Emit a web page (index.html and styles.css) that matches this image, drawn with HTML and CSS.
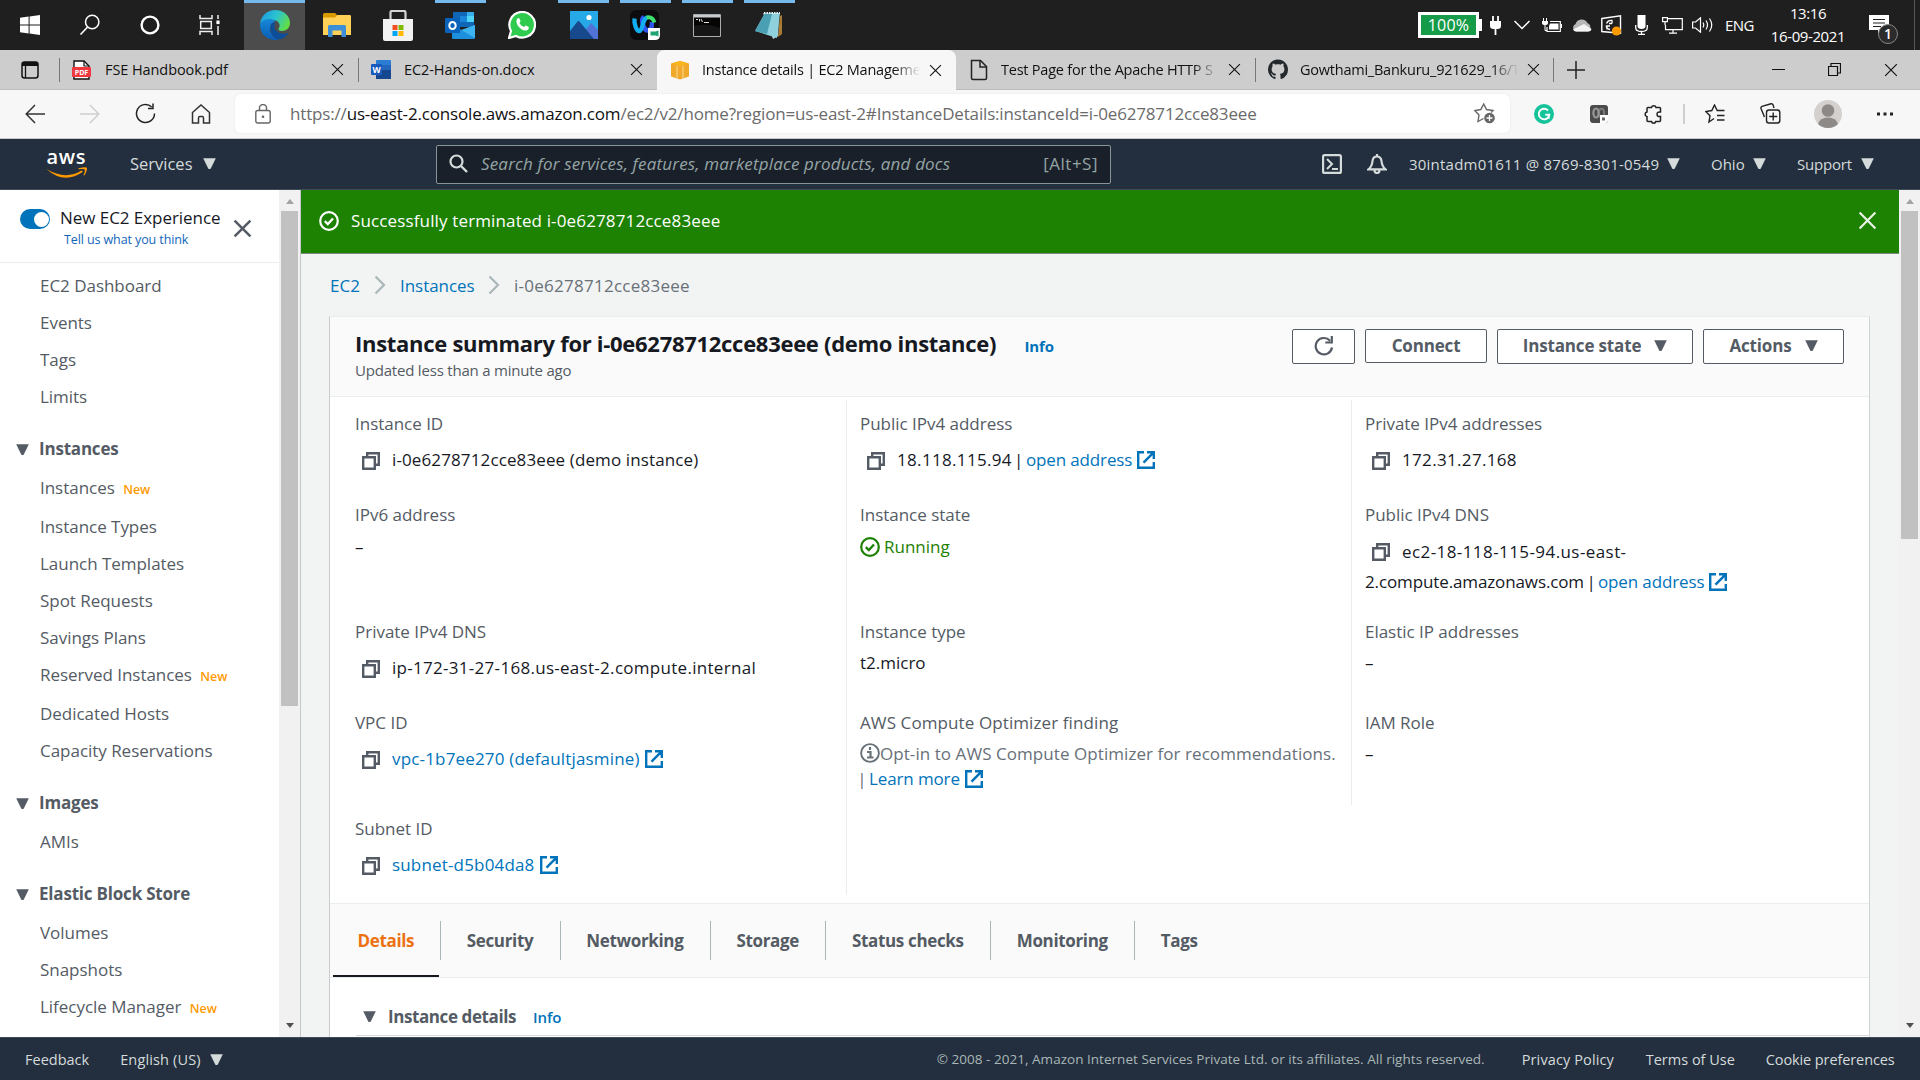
FILE: index.html
```html
<!DOCTYPE html>
<html lang="en">
<head>
<meta charset="utf-8">
<title>Instance details | EC2 Management Console</title>
<link rel="stylesheet" href="styles.css">
</head>
<body>
<svg class="defs" aria-hidden="true">
  <symbol id="i-close" viewBox="0 0 12 12"><path d="M1 1l10 10M11 1L1 11" fill="none" stroke="currentColor"/></symbol>
  <symbol id="i-copy" viewBox="0 0 18 18"><path d="M5.2 5V1.2h11.6v11.6H13" fill="none" stroke="currentColor" stroke-width="2.4"/><path d="M1.2 5.2h11.6v11.6H1.2z" fill="none" stroke="currentColor" stroke-width="2.4"/></symbol>
  <symbol id="i-ext" viewBox="0 0 18 18"><path d="M7 1.2H1.2v15.6h15.6V11M10 1.2h6.8V8M16.2 1.8L6.500 11.700" fill="none" stroke="currentColor" stroke-width="2.4"/></symbol>
  <symbol id="i-tri" viewBox="0 0 12 10"><path d="M.2.2h11.600L7.200 9.500q-1.200 1-2.400 0z" fill="currentColor"/></symbol>
  <symbol id="i-ok" viewBox="0 0 20 20"><circle cx="10" cy="10" r="8.8" fill="none" stroke="currentColor" stroke-width="2.2"/><path d="M5.8 10.2l3 2.9 5.2-5.6" fill="none" stroke="currentColor" stroke-width="2.3"/></symbol>
  <symbol id="i-chev" viewBox="0 0 12 20"><path d="M1.5 1.5l8.5 8.5-8.5 8.5" fill="none" stroke="currentColor" stroke-width="2.2"/></symbol>
</svg>

<div class="taskbar">
  <div class="tb-sys"><svg width="20" height="20" viewBox="0 0 20 20"><path d="M0 2.8l8.6-1.2v7.9H0zM9.600 1.400L20 0v9.500H9.600zM0 10.500h8.600v7.900L0 17.200zM9.600 10.500H20V20L9.600 18.600z" fill="#fff"/></svg></div>
  <div class="tb-sys"><svg width="22" height="22" viewBox="0 0 22 22"><circle cx="13.2" cy="8" r="6.7" fill="none" stroke="#fff" stroke-width="1.5"/><path d="M8.6 13L1.5 20.5" stroke="#fff" stroke-width="1.6"/></svg></div>
  <div class="tb-sys"><svg width="20" height="20" viewBox="0 0 20 20"><circle cx="10" cy="10" r="8.4" fill="none" stroke="#fff" stroke-width="2.4"/></svg></div>
  <div class="tb-sys"><svg width="22" height="20" viewBox="0 0 22 20"><path d="M1 0v3.5h12V0M1 20v-3.5h12V20M1.7 6.5h10.6v7H1.7zM19 0v4M19 11v9" fill="none" stroke="#eee" stroke-width="1.5"/><path d="M17.4 5.5h3.2v3.6h-3.2z" fill="#fff"/></svg></div>
  <div class="tb-app tb-app-on tb-app-first"><svg width="30" height="30" viewBox="0 0 30 30"><defs><linearGradient id="eg" x1="0" x2="1" y1=".2" y2=".6"><stop offset="0" stop-color="#1b9be2"/><stop offset=".5" stop-color="#2cc3d0"/><stop offset="1" stop-color="#63e03e"/></linearGradient><linearGradient id="eb" x1="0" x2="0" y1="0" y2="1"><stop offset="0" stop-color="#1688d8"/><stop offset="1" stop-color="#0a5cb4"/></linearGradient></defs><path d="M0 14C1 5 8 0 15 0c9 0 15 6 15 13 0 5-4 8-8 8-3 0-4.300-1.500-3-3 2-3-.5-8-6-8C7 10 1 12 0 14z" fill="url(#eg)"/><path d="M0 15C1 11 5 9 10 9c3 0 5 1 6 2-4 1-6 4-6 8 0 5 4 9 9 10.500C9 32 0 25 0 15z" fill="url(#eb)"/><path d="M12 13c-3 4-2 11 3 15 5 3 11 0 13.500-5.500-6 3-13 0-14-5-.3-2 .5-4 1-5z" fill="#0c4f98"/></svg></div>
  <div class="tb-app"><svg width="28" height="24" viewBox="0 0 28 24"><path d="M0 1.500Q0 0 1.500 0H12l2.500 2.500H28V22H0z" fill="#d99a00"/><path d="M0 4.500h12L14.500 2H26.500q1.500 0 1.500 1.500V22H0z" fill="#ffd257"/><path d="M5 24V13.500q0-1.500 1.500-1.500h15q1.500 0 1.500 1.500V24h-4.500v-6.500h-9V24z" fill="#3c8fd6"/></svg></div>
  <div class="tb-app"><svg width="30" height="31" viewBox="0 0 30 31"><path d="M7.500 9V2.500Q7.500 1 9 1h12q1.500 0 1.500 1.500V9" fill="none" stroke="#d5d5d5" stroke-width="2.200"/><path d="M0 9h30v20q0 2-2 2H2q-2 0-2-2z" fill="#f2f2f2"/><path d="M9.500 15h5v5h-5z" fill="#f25022"/><path d="M15.500 15h5v5h-5z" fill="#7fba00"/><path d="M9.500 21h5v5h-5z" fill="#00a4ef"/><path d="M15.500 21h5v5h-5z" fill="#ffb900"/></svg></div>
  <div class="tb-app tb-run"><svg width="30" height="27" viewBox="0 0 30 27"><path d="M8 1q0-1 1-1h19q1 0 1 1v14H8z" fill="#1067b8"/><path d="M15 4h7v6h-7z" fill="#1a86d9"/><path d="M22 4h7v6h-7z" fill="#50d3f5"/><path d="M22 0h6q1 0 1 1v3h-7z" fill="#35b0ea"/><path d="M7 13l11.500 6L30 13v12.500q0 1.500-1.500 1.500h-20Q7 27 7 25.500z" fill="#1c8fdd"/><path d="M30 13v13L16 18z" fill="#3db4f2"/><rect y="6" width="15" height="15" rx="1.200" fill="#0a62ba"/><ellipse cx="7.500" cy="13.500" rx="3.200" ry="3.600" fill="none" stroke="#fff" stroke-width="2"/></svg></div>
  <div class="tb-app"><svg width="28" height="28" viewBox="0 0 28 28"><path d="M1 27l2-7A12.800 12.800 0 1 1 8 25z" fill="#2ecb4e" stroke="#fff" stroke-width="2.200"/><path d="M9 8c1-1.300 2-1.200 2.500-.3l1 2.300c.2.600-.9 1.500-1 2 1 2 2.500 3.300 4.500 4 .6-.2 1.300-1.700 1.900-1.500l2.400 1.200c.9.500.7 3-1.800 3.700C13.500 20.600 6.500 13 9 8z" fill="#fff"/></svg></div>
  <div class="tb-app tb-run"><svg width="28" height="28" viewBox="0 0 28 28"><path d="M0 0h28v28H0z" fill="#27a9e8"/><path d="M13 22l8-10 7 7v9H13z" fill="#5273d6"/><path d="M0 20l7.500-9.500Q8.500 9.500 9.500 10.500L24 28H0z" fill="#164a8c"/><circle cx="19" cy="6.500" r="2.600" fill="#fff"/></svg></div>
  <div class="tb-app tb-run"><svg width="30" height="30" viewBox="0 0 30 30"><rect width="29" height="30" rx="6" fill="#0c0c0f"/><path d="M14 7c-4 2 0 13.500 3.500 13.500S22 16 22 12" fill="none" stroke="#2d55f0" stroke-width="4.500"/><path d="M4.500 8.500C4 13 6 21 9.500 21c3.500 0 2.500-13 8-13.500" fill="none" stroke="#12aef0" stroke-width="4.300"/><path d="M16.500 7.500q6-1.500 8 5" fill="none" stroke="#3fe06c" stroke-width="3.800"/><path d="M18 18h12v7q0 5-5 5h-7z" fill="#fff"/><path d="M20.500 21.500h5l3-1v6l-3-1h-5z" fill="#1fa373"/></svg></div>
  <div class="tb-app tb-run"><svg width="28" height="23" viewBox="0 0 28 23"><path d="M.5.500h27v22H.5z" fill="#050505" stroke="#a9adb0"/><path d="M1 1h26v2.500H1z" fill="#c9ccce"/><path d="M3 5.500h2M6.500 5v2.500M8 5l1.500 3M11 8.500h5" stroke="#ddd"/><path d="M1 22V12Q14 8 27 14V22z" fill="#161616"/></svg></div>
  <div class="tb-app tb-run"><svg width="28" height="27" viewBox="0 0 28 27"><path d="M25 4l2-1v19l-4 3z" fill="#a97b35"/><path d="M8 1l16 1.500-1 21.500-5 3z" fill="#b9d5dc"/><path d="M10 1h15l-3 25L0 19z" fill="#8fd0dd"/><path d="M10 1l7 1-5 20L0 19z" fill="#4a9fb2"/><path d="M9 1h16" stroke="#e8eef0" stroke-width="2" stroke-dasharray="1.500 1"/></svg></div>
  <div class="tray">
    <div class="bat"><span>100%</span></div>
    <svg class="t-plug" width="11" height="19" viewBox="0 0 11 19"><path d="M3 0v5M8 0v5M5.500 12v7" stroke="#fff" stroke-width="1.800"/><path d="M0 5h11v5q0 3-3.500 3h-4Q0 13 0 10z" fill="#fff"/></svg>
    <svg class="t-chev" width="16" height="10" viewBox="0 0 16 10"><path d="M.5 1L8 8.500 15.500 1" fill="none" stroke="#fff" stroke-width="1.500"/></svg>
    <svg class="t-batt" width="20" height="15" viewBox="0 0 20 15"><path d="M8 3.500h10.300V13.500H5V9" fill="none" stroke="#fff" stroke-width="1.200"/><path d="M8 5.500h8.500v6H7V8zM19 6h1v4h-1zM0 3h6v2q0 2-3 2T0 5z" fill="#fff"/><path d="M1.500 0v3M4.500 0v3M3 7v5.500h2" stroke="#fff" fill="none"/></svg>
    <svg class="t-cloud" width="20" height="13" viewBox="0 0 20 13"><path d="M4 12.500a4 4 0 0 1-.500-7.500A6.500 6.500 0 0 1 15.500 4a5 5 0 0 1 1 8.500z" fill="#b7b7b7"/><path d="M1 10.500L12 5l7.500 5q-.5 2.500-3 2.500H4q-2 0-3-2z" fill="#f4f4f4"/></svg>
    <svg class="t-upd" width="21" height="21" viewBox="0 0 21 21"><path d="M.8 3.500L19.500.8v17.500L.8 16.500z" fill="none" stroke="#fff" stroke-width="1.400"/><path d="M5.500 8.500Q7 5 11 5.500v3M11 8.500H8M5.500 10.500q-1 3 3.500 4M6 14.500V11h3" fill="none" stroke="#fff" stroke-width="1.300"/><circle cx="15.500" cy="16" r="4.600" fill="#f90"/></svg>
    <svg class="t-mic" width="13" height="20" viewBox="0 0 13 20"><path d="M2.500 0h8v11q0 3-4 3t-4-3z" fill="#fff"/><path d="M.700 10v2.500q0 4 5.800 4t5.800-4V10M6.500 16.500v3M3 19.300h7" fill="none" stroke="#fff" stroke-width="1.300"/></svg>
    <svg class="t-net" width="21" height="17" viewBox="0 0 21 17"><path d="M6 1.600h14.300v11H3.500V8M11 12.600V16M7 16.200h8M.600.600h4.800v4H.6zM3 4.500V8" fill="none" stroke="#fff" stroke-width="1.200"/></svg>
    <svg class="t-vol" width="21" height="16" viewBox="0 0 21 16"><path d="M.6 5h3L8.500.8v14.400L3.600 11H.6z" fill="none" stroke="#fff" stroke-width="1.200"/><path d="M11 5.500q1.500 2.500 0 5M14 3.500q3 4.500 0 9M17.500 1.500q4.500 6.500 0 13" fill="none" stroke="#fff" stroke-width="1.200"/></svg>
    <span class="t-lang">ENG</span>
    <div class="t-clock"><span>13:16</span><span>16-09-2021</span></div>
    <div class="t-note"><svg width="20" height="20" viewBox="0 0 20 20"><path d="M0 0h20v15h-9l-2 5v-5H0z" fill="#fff"/><path d="M4 4.500h12M4 8h12M4 11.500h8" stroke="#222" stroke-width="1.200"/></svg><b>1</b></div>
    <i class="t-edge"></i>
  </div>
</div>

<div class="tabs">
  <div class="tabmenu"><svg width="18" height="18" viewBox="0 0 18 18"><rect x="1" y="1" width="16" height="16" rx="2.500" fill="none" stroke="#111" stroke-width="1.500"/><path d="M1 2.500Q1 1 3 1h12q2 0 2 1.500V5H1z" fill="#111"/><path d="M4.500 5v12" stroke="#111" stroke-width="1.300"/></svg></div>
  <div class="tab sep file"><svg class="fav" width="20" height="20" viewBox="0 0 20 20"><path d="M2 1h10l5 5v13H2z" fill="#fff" stroke="#111" stroke-width="1.400"/><path d="M12 1v5h5" fill="none" stroke="#111" stroke-width="1.200"/><rect y="7" width="19" height="10" rx="1" fill="#f0383e"/><text x="9.500" y="14.500" font-size="7" font-weight="700" text-anchor="middle" fill="#fff">PDF</text></svg><span>FSE Handbook.pdf</span><svg class="x"><use href="#i-close"/></svg></div>
  <div class="tab sep file"><svg class="fav" width="20" height="20" viewBox="0 0 20 20"><rect x="5" y="0" width="15" height="19" rx="1" fill="#2b7cd3"/><path d="M5 5h15v5H5z" fill="#2266bd"/><path d="M5 10h15v9H5z" fill="#15478f"/><rect y="4" width="11" height="11" rx="1" fill="#185abd"/><text x="5.500" y="12.600" font-size="8.500" font-weight="700" text-anchor="middle" fill="#fff">W</text></svg><span>EC2-Hands-on.docx</span><svg class="x"><use href="#i-close"/></svg></div>
  <div class="tab active"><svg class="fav" width="20" height="20" viewBox="0 0 20 20"><path d="M1 3.500L10 1l9 2.500v13L10 19.500l-9-3z" fill="#f0a92b"/><path d="M10 1l9 2.500L10 6 1 3.500z" fill="#f9b51c"/><path d="M7 6v12.500M13 6v12.500" stroke="#f8d488" stroke-width="1.200"/></svg><span class="fade">Instance details | EC2 Manageme</span><svg class="x"><use href="#i-close"/></svg></div>
  <div class="tab"><svg class="fav" width="20" height="22" viewBox="0 0 20 22"><path d="M2.500 1.500h9l6 6V19q0 1.500-1.500 1.500H4Q2.500 20.500 2.500 19z" fill="none" stroke="#222" stroke-width="1.500"/><path d="M11 1.500V8h6.500" fill="none" stroke="#222" stroke-width="1.500"/></svg><span class="fade">Test Page for the Apache HTTP S</span><svg class="x"><use href="#i-close"/></svg></div>
  <div class="tab sep last"><svg class="fav" width="21" height="21" viewBox="0 0 16 16"><path fill="#24292e" d="M8 0C3.580 0 0 3.580 0 8c0 3.540 2.290 6.530 5.470 7.590.4.070.55-.17.55-.38 0-.19-.01-.82-.01-1.490-2.010.37-2.530-.49-2.690-.94-.09-.23-.48-.94-.82-1.130-.28-.15-.68-.52-.01-.53.63-.01 1.080.58 1.230.82.72 1.210 1.870.87 2.330.66.07-.52.28-.87.51-1.070-1.780-.2-3.640-.89-3.640-3.950 0-.87.31-1.590.82-2.150-.08-.2-.36-1.020.08-2.120 0 0 .67-.21 2.200.82.64-.18 1.320-.27 2-.27s1.360.09 2 .27c1.530-1.040 2.200-.82 2.200-.82.44 1.100.16 1.920.08 2.120.51.56.82 1.270.82 2.150 0 3.070-1.870 3.750-3.650 3.950.29.25.54.73.54 1.480 0 1.070-.01 1.930-.01 2.200 0 .21.15.46.55.38A8.010 8.010 0 0 0 16 8c0-4.420-3.580-8-8-8z"/></svg><span class="fade">Gowthami_Bankuru_921629_16/T</span><svg class="x"><use href="#i-close"/></svg></div>
  <div class="newtab"><svg width="18" height="18" viewBox="0 0 18 18"><path d="M9 0v18M0 9h18" stroke="#222" stroke-width="1.500"/></svg></div>
  <div class="win">
    <svg width="13" height="13" viewBox="0 0 13 13"><path d="M0 6.500h13" stroke="#111"/></svg>
    <svg width="13" height="13" viewBox="0 0 13 13"><path d="M.5 3.500h9v9h-9zM3 3V.5h9.500V10H10" fill="none" stroke="#111" stroke-width="1.200"/></svg>
    <svg width="14" height="14"><use href="#i-close"/></svg>
  </div>
</div>

<div class="toolbar">
  <svg class="nav" width="20" height="20" viewBox="0 0 20 20"><path d="M20 10H1.500M10 1L1.200 10 10 19" fill="none" stroke="#333" stroke-width="1.500"/></svg>
  <svg class="nav" width="20" height="20" viewBox="0 0 20 20"><path d="M0 10h18.500M10 1l8.800 9L10 19" fill="none" stroke="#cfcfcf" stroke-width="1.500"/></svg>
  <svg class="nav" width="21" height="21" viewBox="0 0 21 21"><path d="M19.500 10.500a9 9 0 1 1-2.800-6.500M18 .5v5h-5" fill="none" stroke="#222" stroke-width="1.500"/></svg>
  <svg class="nav" width="20" height="20" viewBox="0 0 20 20"><path d="M1.500 8.500L10 1l8.500 7.500V19H12.500v-5q0-1.500-1.300-1.500H8.800q-1.300 0-1.300 1.500v5H1.500z" fill="none" stroke="#333" stroke-width="1.500"/></svg>
  <div class="address">
    <svg width="16" height="20" viewBox="0 0 16 20"><rect x=".8" y="6.500" width="14.400" height="12.500" rx="2" fill="none" stroke="#666" stroke-width="1.400"/><path d="M4.500 6.500V4a3.500 3.500 0 0 1 7 0v2.500" fill="none" stroke="#666" stroke-width="1.400"/><circle cx="8" cy="12.700" r="1.300" fill="#666"/></svg>
    <span class="url">https://<b>us-east-2.console.aws.amazon.com</b>/ec2/v2/home?region=us-east-2#InstanceDetails:instanceId=i-0e6278712cce83eee</span>
    <svg class="fadd" width="21" height="21" viewBox="0 0 21 21"><path d="M9.500 15.500L4 18.500l1-6.500L.8 7.500l6-1L9.700 1l2.800 5.500 6.500 1-2 2" fill="none" stroke="#666" stroke-width="1.400"/><circle cx="15.500" cy="15" r="5.300" fill="#666"/><path d="M15.500 12v6M12.500 15h6" stroke="#fff" stroke-width="1.300"/></svg>
  </div>
  <svg class="ex" width="20" height="20" viewBox="0 0 20 20"><circle cx="10" cy="10" r="10" fill="#15c39a"/><path d="M14 6.500A5.300 5.300 0 1 0 15.300 10.800h-4M14.800 14.800v-4" fill="none" stroke="#fff" stroke-width="1.900"/></svg>
  <svg class="ex" width="18" height="20" viewBox="0 0 18 20"><rect y="1" width="18" height="18" rx="3" fill="#4b4b4b"/><ellipse cx="11.500" cy="9" rx="2.600" ry="4.300" fill="none" stroke="#7a7a7a" stroke-width="2"/><ellipse cx="6" cy="9" rx="2.600" ry="4.500" fill="none" stroke="#989898" stroke-width="2.200"/><path d="M10 11h8v5q0 3-3 3h-5z" fill="#fff"/><path d="M12 13.500h3v3h-3z" fill="#666"/></svg>
  <svg class="ex" width="20" height="20" viewBox="0 0 20 20"><path d="M5 3.500h3.500a2.300 2.300 0 0 1 4.500 0h3.500q1 0 1 1V8q-3.500-.5-3.500 2.300t3.500 2.200v4q0 1-1 1h-3.700a2.200 2.200 0 0 1-4.300 0H5q-1 0-1-1v-3.800a2.400 2.400 0 0 1 0-4.700V4.500q0-1 1-1z" fill="none" stroke="#222" stroke-width="1.500"/></svg>
  <i class="bar"></i>
  <svg class="ex" width="20" height="20" viewBox="0 0 20 20"><path d="M9 14.500L4 18l1-6.300L.8 7.500l6-1L9.500 1l2.700 5.500h7.300M12 11.500h7.500M12 16h7.500" fill="none" stroke="#222" stroke-width="1.400"/></svg>
  <svg class="ex ex-col" width="21" height="21" viewBox="0 0 21 21"><path d="M4.500 14L1 5.500Q.5 4 2 3.300l9-2.500q1.500-.3 2 1L14 5" fill="none" stroke="#222" stroke-width="1.400"/><rect x="6.500" y="7" width="13.300" height="13" rx="2.500" fill="none" stroke="#222" stroke-width="1.400"/><path d="M13.200 9.500v8M9.200 13.500h8" stroke="#222" stroke-width="1.400"/></svg>
  <svg class="ex ex-me" width="28" height="28" viewBox="0 0 28 28"><circle cx="14" cy="14" r="14" fill="#d3d0cd"/><circle cx="14" cy="10.500" r="6.300" fill="#8d8986"/><path d="M4 24q2-6.500 10-6.500T24 24q-4 4-10 4T4 24z" fill="#8d8986"/></svg>
  <svg class="ex" width="16" height="4" viewBox="0 0 16 4"><path d="M0 .500h3v3H0zM6.500.500h3v3h-3zM13 .500h3v3h-3z" fill="#222"/></svg>
</div>

<header class="aws">
  <svg class="logo" width="42" height="27" viewBox="0 0 42 27"><text x="20" y="13" text-anchor="middle" font-size="20" font-weight="600" textLength="39" fill="#fff">aws</text><path d="M.5 18q19 11.500 35 1.500l1.500 1.300Q18 34 .5 18z" fill="#f90"/><path d="M32.500 17.300q8-2 8.500-.3t-2.500 7.500l-1-.3q2-5 1.200-5.700t-6.200-.2z" fill="#f90"/></svg>
  <span class="svc">Services</span><svg class="tri"><use href="#i-tri"/></svg>
  <div class="search"><svg width="19" height="19" viewBox="0 0 19 19"><circle cx="7.500" cy="7.500" r="6" fill="none" stroke="#d5dbdb" stroke-width="2.200"/><path d="M12 12l6 6" stroke="#d5dbdb" stroke-width="2.400"/></svg><em>Search for services, features, marketplace products, and docs</em><kbd>[Alt+S]</kbd></div>
  <svg class="shell" width="20" height="20" viewBox="0 0 20 20"><rect x="1.100" y="1.100" width="17.800" height="17.800" rx="1.500" fill="none" stroke="#d5dbdb" stroke-width="2.200"/><path d="M5 5l5 5-5 5M10 15h6" fill="none" stroke="#d5dbdb" stroke-width="2"/></svg>
  <svg class="bell" width="20" height="20" viewBox="0 0 20 20"><path d="M1.500 15.300h17Q15 12.500 14.500 7 14 2.500 10 2.500T5.500 7Q5 12.500 1.500 15.300zM10 0v2.500M7.500 16q0 3 2.500 3t2.500-3" fill="none" stroke="#d5dbdb" stroke-width="2.200"/></svg>
  <span class="acct">30intadm01611 @ 8769-8301-0549</span><svg class="tri"><use href="#i-tri"/></svg>
  <span class="ohio">Ohio</span><svg class="tri"><use href="#i-tri"/></svg>
  <span class="supp">Support</span><svg class="tri"><use href="#i-tri"/></svg>
</header>

<div class="body">
  <aside class="side">
    <div class="exp">
      <i class="toggle"></i>
      <div class="exptext"><span>New EC2 Experience</span><a>Tell us what you think</a></div>
      <svg class="expx" width="19" height="19"><use href="#i-close"/></svg>
    </div>
    <ul>
      <li>EC2 Dashboard</li><li>Events</li><li>Tags</li><li>Limits</li>
      <li class="h"><svg class="tri"><use href="#i-tri"/></svg>Instances</li>
      <li class="n">Instances <b>New</b></li><li>Instance Types</li><li>Launch Templates</li><li>Spot Requests</li><li>Savings Plans</li><li class="n">Reserved Instances <b>New</b></li><li>Dedicated Hosts</li><li>Capacity Reservations</li>
      <li class="h"><svg class="tri"><use href="#i-tri"/></svg>Images</li>
      <li>AMIs</li>
      <li class="h"><svg class="tri"><use href="#i-tri"/></svg>Elastic Block Store</li>
      <li>Volumes</li><li>Snapshots</li><li>Lifecycle Manager <b>New</b></li>
    </ul>
  </aside>
  <div class="scroll sc1"><i class="up"></i><i class="thumb"></i><i class="down"></i></div>

  <main>
    <div class="flash"><svg width="20" height="20"><use href="#i-ok"/></svg><span>Successfully terminated i-0e6278712cce83eee</span><svg class="fx" width="19" height="19"><use href="#i-close"/></svg></div>
    <nav class="crumbs"><a class="c1">EC2</a><svg width="12" height="20"><use href="#i-chev"/></svg><a class="c2">Instances</a><svg width="12" height="20"><use href="#i-chev"/></svg><span>i-0e6278712cce83eee</span></nav>
    <section class="card">
      <div class="chead">
        <div class="ctitle"><h1>Instance summary for i-0e6278712cce83eee (demo instance) <a>Info</a></h1><p>Updated less than a minute ago</p></div>
        <div class="btns">
          <button class="b1"><svg width="20" height="20" viewBox="0 0 20 20"><path d="M18 11.500a8.200 8.200 0 1 1-2-6.800M17.800 0v6.500h-6.500" fill="none" stroke="#545b64" stroke-width="2.200"/></svg></button>
          <button class="b2">Connect</button>
          <button class="b3">Instance state<svg class="tri"><use href="#i-tri"/></svg></button>
          <button class="b4">Actions<svg class="tri"><use href="#i-tri"/></svg></button>
        </div>
      </div>
      <div class="grid">
        <div class="cell"><label>Instance ID</label><div class="v cp"><svg><use href="#i-copy"/></svg>i-0e6278712cce83eee (demo instance)</div></div>
        <div class="cell l"><label>Public IPv4 address</label><div class="v cp ip"><svg><use href="#i-copy"/></svg>18.118.115.94<i class="pipe">|</i><a>open address</a><svg class="e"><use href="#i-ext"/></svg></div></div>
        <div class="cell l"><label>Private IPv4 addresses</label><div class="v cp ip"><svg><use href="#i-copy"/></svg>172.31.27.168</div></div>

        <div class="cell"><label>IPv6 address</label><div class="v">–</div></div>
        <div class="cell l"><label>Instance state</label><div class="v run"><svg><use href="#i-ok"/></svg>Running</div></div>
        <div class="cell l"><label>Public IPv4 DNS</label><div class="v cp ec2"><svg><use href="#i-copy"/></svg>ec2-18-118-115-94.us-east-</div><div class="v two">2.compute.amazonaws.com<i class="pipe">|</i><a>open address</a><svg class="e"><use href="#i-ext"/></svg></div></div>

        <div class="cell"><label>Private IPv4 DNS</label><div class="v cp dns"><svg><use href="#i-copy"/></svg>ip-172-31-27-168.us-east-2.compute.internal</div></div>
        <div class="cell l"><label>Instance type</label><div class="v up1">t2.micro</div></div>
        <div class="cell l"><label>Elastic IP addresses</label><div class="v up1">–</div></div>

        <div class="cell"><label>VPC ID</label><div class="v cp"><svg><use href="#i-copy"/></svg><a class="vpc">vpc-1b7ee270 (defaultjasmine)</a><svg class="e"><use href="#i-ext"/></svg></div></div>
        <div class="cell l"><label class="wide">AWS Compute Optimizer finding</label><div class="v up1 opt"><svg viewBox="0 0 20 20"><circle cx="10" cy="10" r="8.900" fill="none" stroke="currentColor" stroke-width="1.900"/><path d="M10 4v3M7 9h3.500v5M7 14.500h6.500" fill="none" stroke="currentColor" stroke-width="2.200"/></svg>Opt-in to AWS Compute Optimizer for recommendations.</div><div class="v opt o2"><i class="pipe">|</i><a>Learn more</a><svg class="e"><use href="#i-ext"/></svg></div></div>
        <div class="cell l"><label>IAM Role</label><div class="v up1">–</div></div>

        <div class="cell"><label>Subnet ID</label><div class="v cp"><svg><use href="#i-copy"/></svg><a class="vpc">subnet-d5b04da8</a><svg class="e"><use href="#i-ext"/></svg></div></div>
        <div class="cell l"></div>
      </div>
      <div class="ctabs"><span class="on">Details</span><span>Security</span><span>Networking</span><span>Storage</span><span>Status checks</span><span>Monitoring</span><span>Tags</span></div>
      <div class="det"><svg class="tri"><use href="#i-tri"/></svg><b>Instance details</b><a>Info</a></div>
    </section>
  </main>
  <div class="scroll sc2"><i class="up"></i><i class="thumb"></i><i class="down"></i></div>
</div>

<footer><span>Feedback</span><span class="lang">English (US)</span><svg class="tri"><use href="#i-tri"/></svg><small>© 2008 - 2021, Amazon Internet Services Private Ltd. or its affiliates. All rights reserved.</small><span class="f1">Privacy Policy</span><span class="f2">Terms of Use</span><span class="f3">Cookie preferences</span></footer>
</body>
</html>
```
FILE: styles.css
```css
* { box-sizing: border-box; }
body { margin: 0; width: 1920px; height: 1080px; overflow: hidden; display: flex; flex-direction: column; font-family: "Open Sans", "Noto Sans", sans-serif; font-size: 17px; color: #16191f; background: #fff; white-space: nowrap; }
.defs { display: none; }
svg { flex: none; }
a { color: #0073bb; }
.tri { width: 13px; height: 11px; }

/* Windows taskbar */
.taskbar { flex: none; height: 50px; background: #1f1f1f; display: flex; align-items: center; }
.tb-sys { width: 60px; display: flex; justify-content: center; }
.tb-app { width: 51px; margin-right: 10.8px; height: 50px; display: flex; align-items: center; justify-content: center; border-top: 3px solid transparent; padding-bottom: 3px; }
.tb-run { border-top-color: #76b9ed; }
.tb-app-first { margin-left: 4px; width: 61px; margin-right: 6px; background: #4c4c4c; border-top-color: #76b9ed; }
.tray { margin-left: auto; height: 50px; display: flex; align-items: center; color: #fff; font-size: 15px; padding-right: 5px; }
.bat { position: relative; width: 61px; height: 26px; border: 3px solid #fff; background: #169b48; display: flex; align-items: center; justify-content: center; font-size: 16px; letter-spacing: .2px; margin-right: 1px; }
.bat::after { content: ""; position: absolute; right: -6px; top: 4px; width: 3px; height: 12px; background: #fff; }
.t-plug { margin-left: 10px; }
.t-chev { margin-left: 13px; }
.t-batt { margin-left: 12px; }
.t-cloud { margin-left: 10px; }
.t-upd { margin-left: 9px; }
.t-mic { margin-left: 13px; }
.t-net { margin-left: 14px; }
.t-vol { margin-left: 9px; }
.t-lang { margin-left: 12px; width: 29px; letter-spacing: -.6px; }
.t-clock { margin-left: 16px; width: 76px; display: flex; flex-direction: column; align-items: center; line-height: 23px; letter-spacing: -.4px; padding-bottom: 1px; }
.t-note { position: relative; margin-left: 23px; width: 29px; height: 20px; }
.t-note b { position: absolute; left: 9px; top: 9px; width: 20px; height: 20px; border: 1px solid #8a8a8a; border-radius: 50%; background: #2b2b2b; font-size: 14px; line-height: 18px; text-align: center; font-weight: 600; }
.t-edge { width: 1px; height: 50px; margin-left: 16px; background: #555; }

/* Browser tab strip */
.tabs { flex: none; height: 40px; background: #cdcdcd; display: flex; align-items: center; color: #111; font-size: 14.5px; border-bottom: 1px solid #bdbdbd; }
.tabmenu { width: 59px; height: 18px; padding-left: 21px; }
.tab { position: relative; width: 299px; height: 39px; display: flex; align-items: center; padding-left: 13px; padding-right: 14px; }
.sep::before { content: ""; position: absolute; left: 0; top: 8px; width: 1px; height: 24px; background: #777; }
.last::after { content: ""; position: absolute; right: 0; top: 8px; width: 1px; height: 24px; background: #777; }
.tab span { margin-left: 12px; width: 218px; overflow: hidden; letter-spacing: -.23px; line-height: 24px; }
.tab.file span { margin-left: 13px; letter-spacing: -.08px; }
.tab .fade { -webkit-mask-image: linear-gradient(90deg, #000 88%, transparent); mask-image: linear-gradient(90deg, #000 88%, transparent); }
.tab .fav { width: 20px; font-family: "Open Sans", sans-serif; }
.tab .x { width: 13px; height: 13px; margin-left: auto; }
.active { height: 40px; margin-top: 1px; background: #f7f7f7; border-radius: 8px 8px 0 0; }
.newtab { margin-left: 13px; height: 18px; }
.win { margin-left: auto; display: flex; gap: 43px; padding-right: 22px; align-items: center; }

/* Browser toolbar */
.toolbar { flex: none; height: 49px; background: #f7f7f7; border-bottom: 1px solid #c9c9c9; display: flex; align-items: center; padding-left: 25px; padding-bottom: 1px; }
.nav { margin-right: 35px; }
.address { width: 1275px; height: 39px; margin-left: -11px; background: #fff; border-radius: 6px; display: flex; align-items: center; padding: 0 15px 0 20px; box-shadow: 0 0 2px #e4e4e4; }
.url { margin-left: 19px; color: #6b6b6b; letter-spacing: -.17px; }
.url b { font-weight: 400; color: #111; }
.fadd { margin-left: auto; }
.ex { margin-left: 24px; }
.ex + .ex { margin-left: 35.5px; }
.bar { width: 2px; height: 20px; background: #cfcfcf; margin-left: 20px; }
.bar + .ex { margin-left: 20px; }
.ex + .ex-col { margin-left: 34.5px; }
.ex + .ex-me { margin-left: 33px; }

/* AWS header */
.aws { flex: none; height: 51px; background: #232f3e; border-bottom: 1px solid #414b58; color: #d5dbdb; display: flex; align-items: center; font-weight: 500; font-size: 15px; padding-left: 46px; padding-bottom: 1px; }
.logo { overflow: visible; font-family: "Open Sans", sans-serif; margin-top: 1px; }
.svc { margin-left: 42px; width: 65px; font-size: 16.5px; margin-right: 8px; }
.search { margin-left: 220px; width: 675px; height: 39px; margin-top: 1px; border: 1px solid #879596; border-radius: 2px; background: #1a2029; color: #95a5a6; display: flex; align-items: center; padding: 0 12px 1px 12px; font-weight: 400; font-size: 17px; }
.search em { margin-left: 13px; letter-spacing: .17px; }
.search kbd { margin-left: auto; font: inherit; letter-spacing: .5px; }
.shell { margin-left: 211px; }
.bell { margin-left: 25px; }
.acct { margin-left: 22px; width: 251px; margin-right: 7px; letter-spacing: .22px; }
.ohio { margin-left: 31px; width: 34px; margin-right: 8px; }
.supp { margin-left: 31px; width: 56px; margin-right: 8px; letter-spacing: -.2px; }

/* Page body */
.body { flex: none; height: 847px; display: flex; }
.side { width: 279px; overflow: hidden; color: #545b64; }
.exp { height: 73px; border-bottom: 1px solid #eaeded; display: flex; padding-left: 20px; }
.toggle { position: relative; width: 30px; height: 20px; margin-top: 19px; border-radius: 10px; background: #0073bb; }
.toggle::after { content: ""; position: absolute; right: 1px; top: 3px; width: 15px; height: 15px; border-radius: 50%; background: #fff; }
.exptext { margin: 16px 0 0 10px; width: 162px; display: flex; flex-direction: column; color: #16191f; line-height: 24px; letter-spacing: -.05px; }
.exptext a { font-size: 12.5px; line-height: 20px; margin-left: 4px; letter-spacing: -.1px; color: #1166bb; }
.expx { margin: 29px 0 0 11px; color: #545b64; stroke-width: 1.6px; }
ul { list-style: none; margin: 0; padding: 4px 0 0; }
li { height: 37px; line-height: 37px; padding-left: 40px; letter-spacing: -.03px; }
li.n { height: 39px; }
li b { font-size: 12.5px; font-weight: 600; color: #ff9900; margin-left: 4px; }
li.h { height: 54px; padding: 15px 0 0 16px; line-height: 38px; font-weight: 700; display: flex; letter-spacing: -.2px; }
li.h .tri { margin: 14px 10px 0 0; }
.scroll { position: relative; width: 21px; background: #f1f1f1; display: flex; flex-direction: column; align-items: center; }
.up { margin-top: 9px; border: 4.5px solid transparent; border-top: 0; border-bottom: 5px solid #a3a3a3; }
.thumb { margin-top: 7px; width: 17px; background: #c1c1c1; }
.sc1 .thumb { height: 495px; }
.sc2 .thumb { height: 328px; }
.down { margin-top: auto; margin-bottom: 9px; border: 4.5px solid transparent; border-bottom: 0; border-top: 5px solid #505050; }
main { width: 1599px; background: #f2f3f3; border-left: 1px solid #c4c8cb; overflow: hidden; }
.flash { margin-left: -1px; height: 64px; background: #1d8102; color: #fff; display: flex; align-items: center; padding: 0 22px 2px 19px; border-bottom: 1px solid #7d8a83; font-weight: 500; }
.flash span { margin-left: 12px; letter-spacing: .14px; }
.fx { margin-left: auto; opacity: .9; stroke-width: 1.4px; }
.crumbs { height: 62px; display: flex; align-items: center; padding-left: 29px; color: #687078; }
.crumbs svg { color: #aab7b8; }
.c1 { width: 44px; }
.c2 { margin-left: 14px; width: 88px; letter-spacing: -.05px; }
.crumbs span { margin-left: 14px; letter-spacing: .26px; }

/* Instance card */
.card { margin-left: 28px; width: 1541px; height: 740px; background: #fff; border: 1px solid #d5dbdb; border-color: #eaeded #d0d4d6 #eaeded #c8cccf; }
.chead { height: 80px; background: #fafafa; border-bottom: 1px solid #eaeded; display: flex; justify-content: space-between; padding: 12px 25px 0; }
h1 { margin: -1px 0 0; font-size: 22px; font-weight: 700; line-height: 30px; letter-spacing: -.29px; }
h1 a { font-size: 15px; margin-left: 23px; letter-spacing: -.15px; }
p { margin: -3px 0 0; font-size: 15px; line-height: 25px; color: #545b64; letter-spacing: -.2px; }
.btns { display: flex; gap: 10px; }
button { height: 35px; padding: 0 0 2px; border: 1px solid #545b64; border-radius: 2px; background: #fff; color: #545b64; font: 700 17px "Open Sans", sans-serif; letter-spacing: -.16px; display: flex; align-items: center; justify-content: center; }
button .tri { margin-left: 13px; }
.b1 { width: 63px; } .b2 { width: 122px; height: 34px; } .b3 { width: 196px; } .b4 { width: 141px; }
.grid { display: grid; grid-template-columns: 505px 505px 505px; grid-template-rows: 91px 117px 91px 106px 90px; padding: 3px 0 0 11px; height: 506px; }
.cell { padding: 11px 0 0 13px; border-left: 1px solid transparent; }
.cell.l { border-left-color: #eaeded; }
label { display: block; line-height: 26px; color: #545b64; letter-spacing: -.02px; }
label.wide { letter-spacing: .1px; }
.v { display: flex; align-items: center; height: 26px; margin-top: 5px; }
.v.up1 { margin-top: 4px; }
.v.cp { margin-top: 9.5px; padding-left: 7px; letter-spacing: .12px; }
.v.cp > svg:first-child { width: 18px; height: 18px; margin: 2px 12px 0 0; color: #545b64; }
.v .e { width: 18px; height: 18px; margin: 1px 0 0 5px; color: #0073bb; }
.v a { letter-spacing: -.13px; }
.v a.vpc { letter-spacing: .17px; }
.v.cp.ip { letter-spacing: .33px; }
.v.cp.ec2 { letter-spacing: .42px; margin-top: 10px; }
.v.cp.dns { letter-spacing: .29px; }
.v.two { margin-top: 4px; letter-spacing: -.12px; }
.pipe { font-style: normal; width: 4px; margin: 0 5px; display: flex; justify-content: center; }
.run { color: #1d8102; }
.run svg, .opt svg:first-child { width: 20px; height: 20px; }
.run svg { margin: 1px 4px 0 0; }
.opt { color: #687078; letter-spacing: .06px; }
.o2 { margin-top: -1px; }
.o2 .pipe { margin-left: 0; }
.o2 svg.e:last-child { width: 18px; height: 18px; }
.ctabs { height: 75px; background: #fafafa; border: solid #eaeded; border-width: 1px 0; display: flex; align-items: center; padding-left: 2px; font-weight: 700; color: #545b64; letter-spacing: -.34px; }
.ctabs span { position: relative; height: 73px; line-height: 73px; padding: 0 26.5px; }
.ctabs .on { padding: 0 26px 0 25.5px; color: #ec7211; }
.ctabs span + span::before { content: ""; position: absolute; left: 0; top: 17px; height: 39px; width: 1px; background: #aab7b8; }
.ctabs .on::after { content: ""; position: absolute; left: 1px; right: 1px; bottom: 0; height: 2px; background: #16191f; }
.det { height: 58px; margin-left: 26px; border-bottom: 1px solid #d5dbdb; padding: 20px 0 0 7px; display: flex; align-items: center; color: #545b64; letter-spacing: -.41px; }
.det a { margin-left: 17px; font-size: 15px; font-weight: 600; letter-spacing: -.1px; }
.det b { margin-left: 12px; }

footer { flex: none; height: 43px; background: #232f3e; border-top: 1px solid #414b58; color: #d5dbdb; display: flex; align-items: center; font-size: 14.5px; font-weight: 500; padding-left: 25px; }
.lang { margin-left: 31px; margin-right: 9px; letter-spacing: .15px; }
small { margin-left: 714px; width: 548px; font-size: 13.5px; font-weight: 400; color: #aab7b8; letter-spacing: .03px; }
.f1 { margin-left: 37px; width: 94px; letter-spacing: .12px; } .f2 { margin-left: 30px; width: 89px; } .f3 { margin-left: 31px; letter-spacing: -.1px; }
```
